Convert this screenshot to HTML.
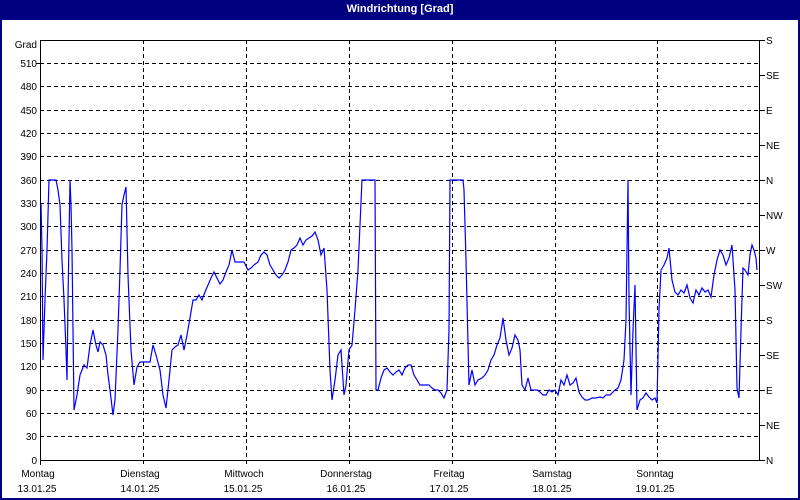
<!DOCTYPE html>
<html><head><style>
body{margin:0;width:800px;height:500px;background:#000080;overflow:hidden;font-family:"Liberation Sans",sans-serif}
#t{position:absolute;left:0;top:0;width:800px;height:20px;color:#fff;font-weight:bold;font-size:11px;text-align:center;line-height:18px}
#w{position:absolute;left:2px;top:20px;width:796px;height:478px;background:#fff}
svg{position:absolute;left:0;top:0}
text{font-family:"Liberation Sans",sans-serif;font-size:10px;fill:#000}
</style></head><body>
<div id="t">Windrichtung [Grad]</div>
<div id="w"></div>
<svg width="800" height="500">
<g stroke="#000" stroke-dasharray="4,3" stroke-width="1">
<line x1="40" x2="760" y1="63.5" y2="63.5"/><line x1="40" x2="760" y1="86.5" y2="86.5"/><line x1="40" x2="760" y1="110.5" y2="110.5"/><line x1="40" x2="760" y1="133.5" y2="133.5"/><line x1="40" x2="760" y1="156.5" y2="156.5"/><line x1="40" x2="760" y1="180.5" y2="180.5"/><line x1="40" x2="760" y1="203.5" y2="203.5"/><line x1="40" x2="760" y1="226.5" y2="226.5"/><line x1="40" x2="760" y1="250.5" y2="250.5"/><line x1="40" x2="760" y1="273.5" y2="273.5"/><line x1="40" x2="760" y1="296.5" y2="296.5"/><line x1="40" x2="760" y1="320.5" y2="320.5"/><line x1="40" x2="760" y1="343.5" y2="343.5"/><line x1="40" x2="760" y1="366.5" y2="366.5"/><line x1="40" x2="760" y1="390.5" y2="390.5"/><line x1="40" x2="760" y1="413.5" y2="413.5"/><line x1="40" x2="760" y1="436.5" y2="436.5"/>
<line x1="143.5" x2="143.5" y1="40" y2="465"/><line x1="246.5" x2="246.5" y1="40" y2="465"/><line x1="349.5" x2="349.5" y1="40" y2="465"/><line x1="452.5" x2="452.5" y1="40" y2="465"/><line x1="555.5" x2="555.5" y1="40" y2="465"/><line x1="657.5" x2="657.5" y1="40" y2="465"/>
</g>
<g stroke="#000" stroke-width="1" fill="none">
<rect x="40.5" y="40.5" width="719" height="420"/>
<line x1="36" x2="40" y1="63.5" y2="63.5"/><line x1="40.5" x2="40.5" y1="460" y2="465"/>
<line x1="760" x2="765" y1="40.5" y2="40.5"/><line x1="760" x2="765" y1="75.5" y2="75.5"/><line x1="760" x2="765" y1="110.5" y2="110.5"/><line x1="760" x2="765" y1="145.5" y2="145.5"/><line x1="760" x2="765" y1="180.5" y2="180.5"/><line x1="760" x2="765" y1="215.5" y2="215.5"/><line x1="760" x2="765" y1="250.5" y2="250.5"/><line x1="760" x2="765" y1="285.5" y2="285.5"/><line x1="760" x2="765" y1="320.5" y2="320.5"/><line x1="760" x2="765" y1="355.5" y2="355.5"/><line x1="760" x2="765" y1="390.5" y2="390.5"/><line x1="760" x2="765" y1="425.5" y2="425.5"/><line x1="760" x2="765" y1="460.5" y2="460.5"/>
</g>
<g text-anchor="end">
<text x="37" y="48">Grad</text><text x="37" y="67">510</text><text x="37" y="90">480</text><text x="37" y="114">450</text><text x="37" y="137">420</text><text x="37" y="160">390</text><text x="37" y="184">360</text><text x="37" y="207">330</text><text x="37" y="230">300</text><text x="37" y="254">270</text><text x="37" y="277">240</text><text x="37" y="300">210</text><text x="37" y="324">180</text><text x="37" y="347">150</text><text x="37" y="370">120</text><text x="37" y="394">90</text><text x="37" y="417">60</text><text x="37" y="440">30</text><text x="37" y="464">0</text>
</g>
<g>
<text x="766" y="44">S</text><text x="766" y="79">SE</text><text x="766" y="114">E</text><text x="766" y="149">NE</text><text x="766" y="184">N</text><text x="766" y="219">NW</text><text x="766" y="254">W</text><text x="766" y="289">SW</text><text x="766" y="324">S</text><text x="766" y="359">SE</text><text x="766" y="394">E</text><text x="766" y="429">NE</text><text x="766" y="464">N</text>
</g>
<g text-anchor="middle">
<text x="38" y="477">Montag</text><text x="37" y="492">13.01.25</text>
<text x="140" y="477">Dienstag</text><text x="140" y="492">14.01.25</text>
<text x="244" y="477">Mittwoch</text><text x="243" y="492">15.01.25</text>
<text x="346" y="477">Donnerstag</text><text x="346" y="492">16.01.25</text>
<text x="449" y="477">Freitag</text><text x="449" y="492">17.01.25</text>
<text x="552" y="477">Samstag</text><text x="552" y="492">18.01.25</text>
<text x="655" y="477">Sonntag</text><text x="655" y="492">19.01.25</text>
</g>
<polyline fill="none" stroke="#0000ff" stroke-width="1.2" points="41,203 42,250 43,360 45,300 47,250 49,180 52,180 56,180 58,190 60,205 62,260 64,300 66,350 67,380 68,300 70,180 71,205 72,250 74,410 77,395 80,375 84,365 87,368 90,345 93,330 96,345 98,352 100,342 103,345 106,355 108,375 110,390 113,415 115,400 118,330 120,270 122,205 124,195 126,187 128,275 131,350 134,385 137,367 140,362 145,362 150,362 153,345 156,355 160,370 163,395 166,408 169,380 172,350 175,347 178,345 181,335 184,350 187,335 190,318 193,300 196,300 199,295 202,300 205,292 208,285 211,278 214,272 217,278 220,284 223,280 226,272 229,265 232,250 235,262 240,262 244,262 248,270 251,268 254,265 258,262 261,255 264,252 267,255 270,265 273,270 276,275 279,278 282,275 285,270 288,262 291,250 294,248 297,245 300,238 303,245 306,240 309,238 312,236 315,232 318,240 321,255 324,248 327,290 330,370 332,400 335,380 338,355 341,350 344,395 346,385 349,350 352,345 355,310 358,270 360,225 362,180 365,180 370,180 375,180 376,390 378,390 381,378 384,370 387,368 390,372 393,375 396,372 399,370 402,375 405,368 408,365 411,365 414,375 417,380 420,385 426,385 429,385 432,388 435,390 438,390 441,393 444,398 447,390 449,330 450,180 455,180 463,180 464,190 466,260 469,385 472,370 475,385 478,380 482,378 485,375 488,370 491,360 494,355 497,345 500,338 503,318 506,340 509,355 512,348 515,335 518,340 520,350 522,385 525,390 528,378 531,390 537,390 540,392 543,395 546,395 549,390 552,392 555,390 558,395 561,380 564,385 567,375 570,385 573,383 576,378 579,392 582,397 585,400 588,400 592,398 596,398 600,397 603,398 606,395 610,395 615,390 618,388 621,380 624,360 626,320 628,180 629,300 631,395 633,330 635,285 637,410 640,400 643,398 646,393 649,397 652,400 655,398 657,403 659,310 661,270 664,265 667,258 669,248 672,280 675,292 678,295 681,290 684,293 687,285 690,298 693,303 696,290 699,295 702,288 705,292 708,290 711,297 714,275 717,260 720,250 723,255 726,265 729,258 732,245 735,290 737,388 739,398 741,330 743,268 745,270 748,275 750,255 752,245 754,250 756,258 757,270"/>
</svg>
</body></html>
